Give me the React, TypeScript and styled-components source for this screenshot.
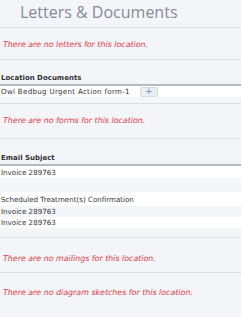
import styled, { createGlobalStyle } from 'styled-components';

const GlobalStyle = createGlobalStyle`
  html, body {
    margin: 0;
    padding: 0;
    background: #ffffff;
  }
`;

const StyledElement = styled.div`
  &.Docs {
    width: 241px;
    height: 317px;
    overflow: hidden;
    background: #f4f5f9;
    font-family: 'DejaVu Sans', Verdana, sans-serif;
    font-size: 7.1px;
    color: #2f3236;
  }
`;

const TitleBar = styled.h1`
  margin: 0;
  height: 27px;
  padding-left: 20px;
  border-bottom: 1px solid #dcdee3;
  font-family: 'Open Sans', sans-serif;
  font-weight: 400;
  font-size: 16px;
  line-height: 25px;
  color: #858b97;
`;

const EmptySection = styled.div<{ $height: number; $top: number }>`
  height: ${(p) => p.$height}px;
  box-sizing: border-box;
  padding: ${(p) => p.$top}px 0 0 3px;
  border-bottom: 1px solid #dcdee3;
`;

const EmptyNote = styled.p`
  margin: 0;
  font-style: italic;
  font-size: 7.9px;
  color: #e23a45;
  line-height: 10px;
`;

const TableBlock = styled.div<{ $height: number; $top: number }>`
  height: ${(p) => p.$height}px;
  padding-top: ${(p) => p.$top}px;
  box-sizing: border-box;
  border-bottom: 1px solid #dcdee3;
`;

const TableHeader = styled.div`
  font-weight: 700;
  font-size: 7px;
  line-height: 11px;
  padding-left: 1px;
  border-bottom: 2px solid #b7b9be;
`;

const Row = styled.div<{ $alt?: boolean; $height?: number }>`
  display: flex;
  align-items: center;
  gap: 10px;
  height: ${(p) => p.$height ?? 11}px;
  padding-left: 1px;
  background: ${(p) => (p.$alt ? '#f4f5f9' : '#ffffff')};
`;

const DocName = styled.span`
  letter-spacing: 0.3px;
`;

const AddButton = styled.button`
  width: 18px;
  height: 10px;
  padding: 0;
  border: 1px solid #d6dae2;
  border-radius: 2px;
  background: #e9edf4;
  color: #6b8fc4;
  font-family: 'DejaVu Sans', sans-serif;
  font-size: 9px;
  line-height: 7px;
`;

const App = () => (
  <>
    <GlobalStyle />
    <StyledElement className="Docs">
      <TitleBar>Letters &amp; Documents</TitleBar>
      <EmptySection $height={32} $top={12}>
        <EmptyNote>There are no letters for this location.</EmptyNote>
      </EmptySection>
      <TableBlock $height={44} $top={13}>
        <TableHeader>Location Documents</TableHeader>
        <Row $height={11}>
          <DocName>Owl Bedbug Urgent Action form-1</DocName>
          <AddButton type="button">+</AddButton>
        </Row>
      </TableBlock>
      <EmptySection $height={35} $top={12}>
        <EmptyNote>There are no forms for this location.</EmptyNote>
      </EmptySection>
      <TableBlock $height={99} $top={14}>
        <TableHeader>Email Subject</TableHeader>
        <Row $height={12}>Invoice 289763</Row>
        <Row $alt $height={14} />
        <Row $height={14}>Scheduled Treatment(s) Confirmation</Row>
        <Row $alt>Invoice 289763</Row>
        <Row>Invoice 289763</Row>
      </TableBlock>
      <EmptySection $height={35} $top={16}>
        <EmptyNote>There are no mailings for this location.</EmptyNote>
      </EmptySection>
      <EmptySection $height={46} $top={15}>
        <EmptyNote>There are no diagram sketches for this location.</EmptyNote>
      </EmptySection>
    </StyledElement>
  </>
);

export default App;
